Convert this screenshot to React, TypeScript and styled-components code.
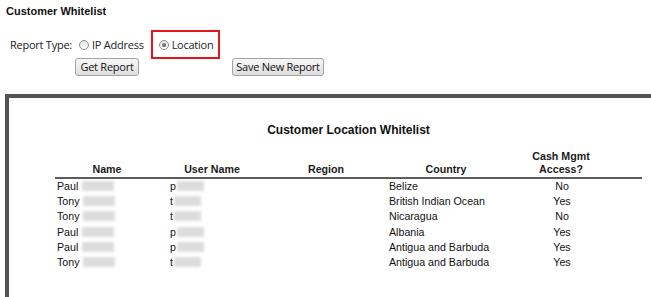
import React from 'react'
import styled, { createGlobalStyle } from 'styled-components'

const GlobalStyle = createGlobalStyle`
  html, body {
    margin: 0;
    padding: 0;
    background: #fff;
    overflow: hidden;
  }
  body {
    font-family: 'Liberation Sans', Arial, sans-serif;
    color: #000;
  }
`

const Page = styled.div`
  width: 651px;
  height: 297px;
  overflow: hidden;
`

const Title = styled.h1`
  margin: 0;
  padding: 5px 0 0 6px;
  font-size: 11px;
  line-height: 13px;
  font-weight: 700;
  color: #111;
`

const Form = styled.div`
  font-family: 'Open Sans', 'Noto Sans', sans-serif;
  font-size: 11px;
  letter-spacing: -0.25px;
  color: #222;
`

const TypeRow = styled.div`
  display: flex;
  align-items: center;
  margin-top: 14px;
  padding-left: 10px;
  height: 25px;
`

const Label = styled.span`
  width: 69px;
`

const Option = styled.label<{ $marked?: boolean }>`
  display: flex;
  align-items: center;
  gap: 3px;
  margin-left: ${(p) => (p.$marked ? '9px' : '0')};
  padding: ${(p) => (p.$marked ? '5px 5px 5px 6px' : '0')};
  outline: ${(p) => (p.$marked ? '2px solid #e3161b' : 'none')};
`

const Radio = styled.span<{ $checked?: boolean }>`
  position: relative;
  width: 8px;
  height: 8px;
  border-radius: 50%;
  border: 1px solid #8c8c8c;
  background: linear-gradient(#e6e6e6, #fdfdfd);

  &::after {
    content: '';
    display: ${(p) => (p.$checked ? 'block' : 'none')};
    position: absolute;
    left: 2px;
    top: 2px;
    width: 4px;
    height: 4px;
    border-radius: 50%;
    background: radial-gradient(circle at 40% 35%, #9a9a9a, #2e2e2e);
  }
`

const ButtonRow = styled.div`
  display: flex;
  gap: 93px;
  margin-top: 1px;
  padding-left: 75px;
`

const Button = styled.button<{ $w: number }>`
  width: ${(p) => p.$w}px;
  height: 18px;
  padding: 0;
  font-family: 'Open Sans', 'Noto Sans', sans-serif;
  font-size: 11px;
  letter-spacing: -0.25px;
  line-height: 16px;
  color: #111;
  border: 1px solid #a3a3a3;
  border-radius: 3px;
  background: linear-gradient(#f7f7f7 0%, #ececec 50%, #dcdcdc 100%);
`

const Panel = styled.div`
  margin: 18px 0 0 5px;
  width: 680px;
  height: 240px;
  border: 4px solid #535353;
  padding: 25px 0 0 46px;
  box-sizing: border-box;
`

const ReportTitle = styled.div`
  width: 587px;
  text-align: center;
  font-size: 12px;
  line-height: 14px;
  font-weight: 700;
  color: #111;
`

const Table = styled.table`
  margin-top: 13px;
  width: 587px;
  table-layout: fixed;
  border-collapse: collapse;
  font-size: 10.67px;
`

const Head = styled.th`
  vertical-align: bottom;
  text-align: center;
  font-weight: 700;
  line-height: 13px;
  padding: 0 0 1px;
  color: #1a1a1a;
  border-bottom: 2px solid #5c5c5c;
`

const Cell = styled.td<{ $center?: boolean; $indent?: number }>`
  height: 15.2px;
  padding: 0 0 0 ${(p) => p.$indent ?? 2}px;
  line-height: 15px;
  text-align: ${(p) => (p.$center ? 'center' : 'left')};
  white-space: nowrap;
  overflow: hidden;
  color: #111;
`

const Hidden = styled.span<{ $w: number }>`
  display: inline-block;
  width: ${(p) => p.$w}px;
  height: 10px;
  margin-left: 1px;
  vertical-align: -1px;
  background: #dcdcdc;
  filter: blur(1.6px);
`

const rows = [
  { first: 'Paul', user: 'p', country: 'Belize', cash: 'No' },
  { first: 'Tony', user: 't', country: 'British Indian Ocean', cash: 'Yes' },
  { first: 'Tony', user: 't', country: 'Nicaragua', cash: 'No' },
  { first: 'Paul', user: 'p', country: 'Albania', cash: 'Yes' },
  { first: 'Paul', user: 'p', country: 'Antigua and Barbuda', cash: 'Yes' },
  { first: 'Tony', user: 't', country: 'Antigua and Barbuda', cash: 'Yes' },
]

export default function App() {
  return (
    <Page>
      <GlobalStyle />
      <Title>Customer Whitelist</Title>
      <Form>
        <TypeRow>
          <Label>Report Type:</Label>
          <Option>
            <Radio />
            IP Address
          </Option>
          <Option $marked>
            <Radio $checked />
            Location
          </Option>
        </TypeRow>
        <ButtonRow>
          <Button $w={64}>Get Report</Button>
          <Button $w={92}>Save New Report</Button>
        </ButtonRow>
      </Form>
      <Panel>
        <ReportTitle>Customer Location Whitelist</ReportTitle>
        <Table>
          <colgroup>
            <col style={{ width: 104 }} />
            <col style={{ width: 106 }} />
            <col style={{ width: 122 }} />
            <col style={{ width: 118 }} />
            <col style={{ width: 112 }} />
            <col style={{ width: 25 }} />
          </colgroup>
          <thead>
            <tr>
              <Head>Name</Head>
              <Head>User Name</Head>
              <Head>Region</Head>
              <Head>Country</Head>
              <Head>
                Cash Mgmt
                <br />
                Access?
              </Head>
              <Head />
            </tr>
          </thead>
          <tbody>
            {rows.map((r, i) => (
              <tr key={i}>
                <Cell>
                  {r.first} <Hidden $w={32} />
                </Cell>
                <Cell $indent={11}>
                  {r.user}
                  <Hidden $w={27} />
                </Cell>
                <Cell />
                <Cell>{r.country}</Cell>
                <Cell $center>{r.cash}</Cell>
                <Cell />
              </tr>
            ))}
          </tbody>
        </Table>
      </Panel>
    </Page>
  )
}
